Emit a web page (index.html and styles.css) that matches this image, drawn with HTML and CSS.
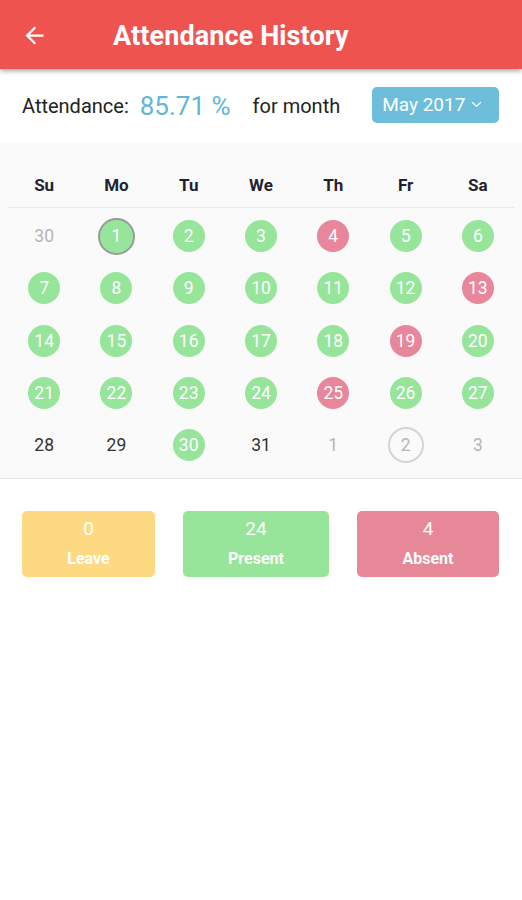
FILE: index.html
```html
<!DOCTYPE html>
<html>
<head>
<meta charset="utf-8">
<link rel="stylesheet" href="styles.css">
</head>
<body>
<header class="appbar">
  <svg class="back" viewBox="0 0 24 24" width="27" height="27"><path d="M20 11H7.83l5.59-5.59L12 4l-8 8 8 8 1.41-1.41L7.83 13H20v-2z" fill="#fff"/></svg>
  <h1 class="title">Attendance History</h1>
</header>
<section class="summary">
  <span class="label">Attendance:</span>
  <span class="pct">85.71 %</span>
  <span class="label month-label">for month</span>
  <button class="month-btn">May 2017<svg class="chev" viewBox="0 0 12 8" width="11" height="7"><path d="M1 1.5l5 4.5 5-4.5" fill="none" stroke="#fff" stroke-width="1.4"/></svg></button>
</section>
<section class="calendar">
  <div class="week head">
    <div>Su</div><div>Mo</div><div>Tu</div><div>We</div><div>Th</div><div>Fr</div><div>Sa</div>
  </div>
  <div class="days">
    <div class="d"><span class="n other">30</span></div>
    <div class="d"><span class="n p today">1</span></div>
    <div class="d"><span class="n p">2</span></div>
    <div class="d"><span class="n p">3</span></div>
    <div class="d"><span class="n a">4</span></div>
    <div class="d"><span class="n p">5</span></div>
    <div class="d"><span class="n p">6</span></div>

    <div class="d"><span class="n p">7</span></div>
    <div class="d"><span class="n p">8</span></div>
    <div class="d"><span class="n p">9</span></div>
    <div class="d"><span class="n p">10</span></div>
    <div class="d"><span class="n p">11</span></div>
    <div class="d"><span class="n p">12</span></div>
    <div class="d"><span class="n a">13</span></div>

    <div class="d"><span class="n p">14</span></div>
    <div class="d"><span class="n p">15</span></div>
    <div class="d"><span class="n p">16</span></div>
    <div class="d"><span class="n p">17</span></div>
    <div class="d"><span class="n p">18</span></div>
    <div class="d"><span class="n a">19</span></div>
    <div class="d"><span class="n p">20</span></div>

    <div class="d"><span class="n p">21</span></div>
    <div class="d"><span class="n p">22</span></div>
    <div class="d"><span class="n p">23</span></div>
    <div class="d"><span class="n p">24</span></div>
    <div class="d"><span class="n a">25</span></div>
    <div class="d"><span class="n p">26</span></div>
    <div class="d"><span class="n p">27</span></div>

    <div class="d"><span class="n">28</span></div>
    <div class="d"><span class="n">29</span></div>
    <div class="d"><span class="n p">30</span></div>
    <div class="d"><span class="n">31</span></div>
    <div class="d"><span class="n other">1</span></div>
    <div class="d"><span class="n other ring">2</span></div>
    <div class="d"><span class="n other">3</span></div>
  </div>
</section>
<section class="legend">
  <div class="box leave"><span class="num">0</span><span class="cap">Leave</span></div>
  <div class="box present"><span class="num">24</span><span class="cap">Present</span></div>
  <div class="box absent"><span class="num">4</span><span class="cap">Absent</span></div>
</section>
</body>
</html>
```
FILE: styles.css
```css
* { box-sizing: border-box; }
html, body { margin: 0; padding: 0; background: #fff; }
body { font-family: Roboto, "Noto Sans", sans-serif; width: 522px; height: 900px; overflow: hidden; }

.appbar {
  height: 69px;
  background: #ef5350;
  display: flex;
  align-items: center;
  padding: 3px 0 0 21px;
  box-shadow: 0 2px 5px rgba(0,0,0,0.35);
  position: relative;
  z-index: 2;
}
.back { display: block; margin-top: -1px; }
.title {
  margin: 0 0 0 65px;
  color: #fff;
  font-size: 27px;
  font-weight: 700;
  letter-spacing: 0.1px;
}

.summary {
  height: 74px;
  display: flex;
  align-items: center;
  padding-left: 22px;
}
.label { font-size: 20px; color: #222; }
.pct { font-size: 26px; color: #5fb7d6; margin-left: 11px; }
.month-label { margin-left: 22px; }
.month-btn {
  margin-left: 32px;
  width: 127px;
  height: 36px;
  border: none;
  border-radius: 5px;
  background: #6dbedb;
  color: #fff;
  font-family: Roboto, sans-serif;
  font-size: 19px;
  display: flex;
  align-items: center;
  padding: 0 0 0 10px;
  margin-top: -3px;
}
.chev { margin-left: 6px; }

.calendar {
  background: #fafafa;
  padding: 20px 8px 7px;
  border-bottom: 1px solid #e6e6e6;
}
.week {
  display: grid;
  grid-template-columns: repeat(7, 1fr);
}
.head {
  height: 45px;
  align-items: center;
  text-align: center;
  font-weight: 700;
  font-size: 17px;
  color: #1f2233;
  border-bottom: 1px solid #e8e8e8;
  padding-bottom: 1px;
}
.days {
  display: grid;
  grid-template-columns: repeat(7, 1fr);
  grid-auto-rows: 52.25px;
  padding-top: 2px;
}
.d { display: flex; align-items: center; justify-content: center; }
.n {
  width: 32px; height: 32px;
  border-radius: 50%;
  display: flex; align-items: center; justify-content: center;
  font-size: 17.5px;
  color: #333;
}
.n.other { color: #b5b5b5; }
.n.p { background: #96e59a; color: #fff; }
.n.a { background: #e8879b; color: #fff; }
.n.today { width: 37px; height: 37px; border: 2px solid #9a9a9a; }
.n.ring { width: 36px; height: 36px; border: 2px solid #d4d4d4; }

.legend {
  display: grid;
  grid-template-columns: 133px 146px 142px;
  column-gap: 28px;
  padding: 32px 22px 0;
}
.box {
  height: 66px;
  border-radius: 5px;
  display: flex;
  flex-direction: column;
  align-items: center;
  color: #fff;
  padding-top: 7px;
}
.num { font-size: 19px; line-height: 22px; }
.cap { font-size: 16px; font-weight: 700; line-height: 20px; margin-top: 9px; }
.leave { background: #fdda82; }
.present { background: #97e59a; }
.absent { background: #e78898; }
```
